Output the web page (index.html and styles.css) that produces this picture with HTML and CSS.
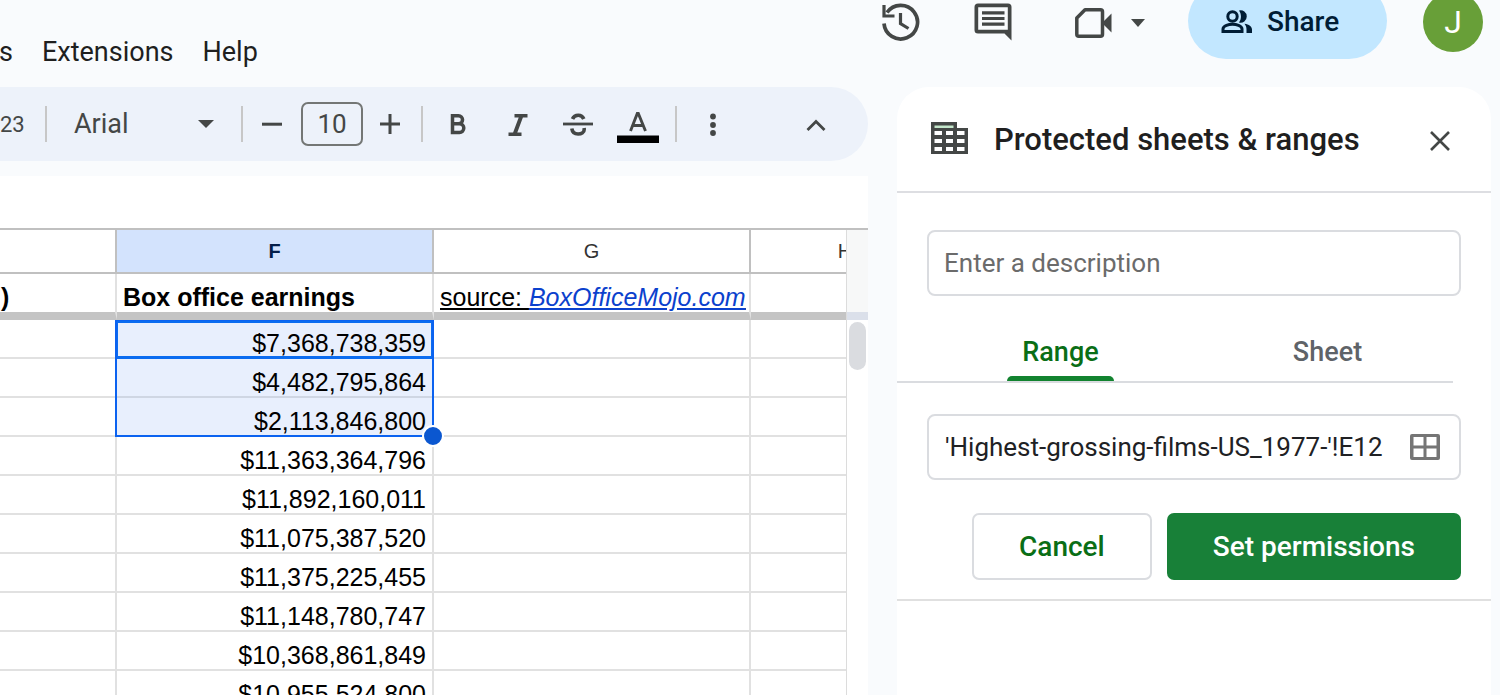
FILE: index.html
```html
<!DOCTYPE html>
<html lang="en">
<head>
<meta charset="utf-8">
<title>Protected sheets &amp; ranges</title>
<link rel="stylesheet" href="styles.css">
</head>
<body>
<div class="app">
  <header class="topbar">
    <nav class="menus" aria-label="Menu bar">
      <button class="menu">s</button>
      <button class="menu">Extensions</button>
      <button class="menu">Help</button>
    </nav>
    <div class="actions">
      <button class="icon-btn history" aria-label="Version history">
        <svg width="40" height="40" viewBox="0 0 40 40" fill="none" stroke="#444746" stroke-width="3.700"><path d="M3 21.500A16.800 16.800 0 1 0 6 10.500"/><path d="M3 3v11h10.500" stroke-width="3.200"/><path d="M19.500 11v10.500l8 5" stroke-width="3.200"/></svg>
      </button>
      <button class="icon-btn comments" aria-label="Comments">
        <svg width="40" height="40" viewBox="0 0 40 40"><path fill="#444746" fill-rule="evenodd" d="M4 1.500h30a3.500 3.500 0 0 1 3.500 3.500V38.500l-7-7H4A3.500 3.500 0 0 1 .5 28V5A3.500 3.500 0 0 1 4 1.500zM4.200 5.200v22.600h29.600V5.200z"/><path fill="#444746" d="M8 9.300h22.500v3.200H8zM8 14.900h22.500v3.200H8zM8 20.500h22.500v3.200H8z"/></svg>
      </button>
      <button class="icon-btn meet" aria-label="Meet">
        <svg width="40" height="32" viewBox="0 0 40 32"><path fill="none" stroke="#444746" stroke-width="3.500" stroke-linejoin="round" d="M11 2.800h15.500a2 2 0 0 1 2 2v22.400a2 2 0 0 1-2 2H4.800a2 2 0 0 1-2-2V11z"/><path fill="#444746" d="M28 16l9.500-9.500v19z"/></svg>
        <svg width="14" height="8" viewBox="0 0 14 8"><path fill="#444746" d="M0 0h14L7 8z"/></svg>
      </button>
      <button class="share">
        <svg width="32" height="24" viewBox="0 0 32 24"><g fill="none" stroke="#001d35" stroke-width="3"><circle cx="11.500" cy="6.500" r="4.700"/><path d="M2 21.500v-2.500c0-3.500 6-4.800 9.500-4.800s9.500 1.300 9.500 4.800v2.500z"/></g><path fill="#001d35" d="M18 .5a6.200 6.200 0 1 1 0 12c2.600-3.500 2.600-8.500 0-12zM23.500 13.800c4.500.8 7.500 2.700 7.500 5.700V23h-5.500v-3.500c0-2.400-.8-4.200-2-5.700z"/></svg>
        Share
      </button>
      <button class="avatar" aria-label="Account">J</button>
    </div>
  </header>

  <div class="workspace">
    <main class="document">
      <div class="toolbar" role="toolbar" aria-label="Formatting">
        <button class="tool number-format">23</button>
        <span class="divider"></span>
        <button class="tool font-picker">Arial
          <svg width="16" height="8" viewBox="0 0 16 8"><path fill="#444746" d="M0 0h16L8 8z"/></svg>
        </button>
        <span class="divider"></span>
        <button class="tool size-down" aria-label="Decrease font size"><svg width="20" height="20" viewBox="0 0 20 20"><path fill="#444746" d="M0 8.700h20v3H0z"/></svg></button>
        <input class="font-size" aria-label="Font size" value="10">
        <button class="tool size-up" aria-label="Increase font size"><svg width="20" height="20" viewBox="0 0 20 20"><path fill="#444746" d="M8.500 0h3v8.500H20v3h-8.500V20h-3v-8.500H0v-3h8.500z"/></svg></button>
        <span class="divider"></span>
        <div class="styles">
          <button class="tool style-btn" aria-label="Bold"><svg width="16" height="22" viewBox="0 0 16 22"><path fill="none" stroke="#444746" stroke-width="3.500" d="M2.500 2.700h6a4 4 0 0 1 0 8.100h-6 7a4.300 4.300 0 0 1 0 8.600h-7zM2.500 1v20"/></svg></button>
          <button class="tool style-btn" aria-label="Italic"><svg width="20" height="24" viewBox="0 0 20 24"><path fill="#444746" d="M6.500 2H19.500v3.600h-4.600L9.300 20.400H13.500V24H.5v-3.600h4.600L10.700 5.600H6.500z"/></svg></button>
          <button class="tool style-btn" aria-label="Strikethrough"><svg width="30" height="26" viewBox="0 0 30 26"><g fill="none" stroke="#444746" stroke-width="3.600"><path d="M9.500 8c1-2.500 3-3.700 5.800-3.700 2.600 0 4.500 1.200 5.500 3.700M8.800 17.500c.5 3.600 3 5.500 6.300 5.500 3.500 0 6.100-1.700 6.100-4.500 0-.6 0-1-.1-1.500"/><path stroke-width="2.800" d="M0 13h30"/></g></svg></button>
          <button class="tool style-btn" aria-label="Text color"><svg width="42" height="38" viewBox="0 0 42 38"><path fill="none" stroke="#444746" stroke-width="2.900" d="M13.500 26L20.300 8.500h1L28.500 26M15.800 20.500h10.500"/><path d="M0 30.500h42v7.500H0z"/></svg></button>
        </div>
        <span class="divider"></span>
        <button class="tool more" aria-label="More"><svg width="6" height="24" viewBox="0 0 6 24"><g fill="#444746"><circle cx="3" cy="4.500" r="2.900"/><circle cx="3" cy="13" r="2.900"/><circle cx="3" cy="21" r="2.900"/></g></svg></button>
        <button class="tool collapse" aria-label="Hide menus"><svg width="20" height="14" viewBox="0 0 20 14"><path fill="none" stroke="#444746" stroke-width="2.800" d="M1.500 13L10 4.500l8.500 8.500"/></svg></button>
      </div>

      <div class="formula-bar"></div>

      <div class="sheet">
        <div class="sheet-view">
          <table class="cells">
            <colgroup><col class="col-e"><col class="col-f"><col class="col-g"><col class="col-h"></colgroup>
            <thead>
              <tr class="letters"><th></th><th class="current">F</th><th>G</th><th>H</th></tr>
              <tr class="frozen"><th class="cut">)</th><th>Box office earnings</th><td><span class="source">source: <a href="#">BoxOfficeMojo.com</a></span></td><td></td></tr>
            </thead>
            <tbody>
              <tr><td></td><td class="picked anchor">$7,368,738,359<span class="active-cell"></span><span class="selection"></span></td><td></td><td></td></tr>
              <tr><td></td><td class="picked">$4,482,795,864</td><td></td><td></td></tr>
              <tr><td></td><td class="picked">$2,113,846,800</td><td></td><td></td></tr>
              <tr><td></td><td>$11,363,364,796</td><td></td><td></td></tr>
              <tr><td></td><td>$11,892,160,011</td><td></td><td></td></tr>
              <tr><td></td><td>$11,075,387,520</td><td></td><td></td></tr>
              <tr><td></td><td>$11,375,225,455</td><td></td><td></td></tr>
              <tr><td></td><td>$11,148,780,747</td><td></td><td></td></tr>
              <tr><td></td><td>$10,368,861,849</td><td></td><td></td></tr>
              <tr><td></td><td>$10,955,524,800</td><td></td><td></td></tr>
            </tbody>
          </table>
        </div>
        <div class="scrollbar"><div class="scroll-head"></div><div class="scroll-thumb"></div></div>
      </div>
    </main>

    <aside class="panel">
      <div class="panel-head">
        <svg width="38" height="34" viewBox="0 0 38 34"><path fill="#444746" d="M0 0h26v6h11v26H0z"/><path fill="#c4e7cb" d="M3.500 3.500h19v2.500h-19z"/><path fill="#fff" d="M3.500 9h7.500v4H3.500zM15 9h7v4h-7zM26 9h7.500v4H26zM3.500 17h7.500v4H3.500zM15 17h7v4h-7zM26 17h7.500v4H26zM3.500 25h7.500v4H3.500zM15 25h7v4h-7zM26 25h7.500v4H26z"/></svg>
        <h2 class="panel-title">Protected sheets &amp; ranges</h2>
        <button class="close" aria-label="Close"><svg width="20" height="20" viewBox="0 0 20 20"><path fill="none" stroke="#444746" stroke-width="2.600" d="M1 1l18 18M19 1L1 19"/></svg></button>
      </div>
      <form class="panel-form">
        <input class="field" aria-label="Description" placeholder="Enter a description">
        <div class="tabs" role="tablist">
          <button type="button" class="tab tab-on" role="tab" aria-selected="true">Range</button>
          <button type="button" class="tab" role="tab" aria-selected="false">Sheet</button>
        </div>
        <div class="field range-field">
          <input class="range-input" aria-label="Range" value="'Highest-grossing-films-US_1977-'!E12">
          <button type="button" class="range-pick" aria-label="Select data range"><svg width="30" height="26" viewBox="0 0 30 26"><path fill="#757575" fill-rule="evenodd" d="M2 0h26a2 2 0 0 1 2 2v22a2 2 0 0 1-2 2H2a2 2 0 0 1-2-2V2a2 2 0 0 1 2-2zM3.500 3v8.500h10V3zM16.500 3v8.500h10V3zM3.500 14.500V23h10v-8.500zM16.500 14.500V23h10v-8.500z"/></svg></button>
        </div>
        <div class="form-actions">
          <button type="button" class="btn cancel">Cancel</button>
          <button type="button" class="btn primary">Set permissions</button>
        </div>
      </form>
    </aside>
  </div>
</div>
</body>
</html>
```
FILE: styles.css
```css
* { box-sizing: border-box; }

body {
  margin: 0;
  background: #f9fbfd;
  color: #1f1f1f;
  font-family: Roboto, "Liberation Sans", sans-serif;
  font-size: 26px;
}

button, input { font: inherit; color: inherit; margin: 0; }
button { background: none; border: 0; padding: 0; cursor: pointer; }
svg { display: block; flex: none; }

.app {
  height: 100vh;
  display: flex;
  flex-direction: column;
  overflow: hidden;
}

/* Top bar */
.topbar {
  flex: none;
  height: 87px;
  display: flex;
  justify-content: space-between;
  align-items: flex-start;
}
.menus {
  display: flex;
  gap: 29px;
  padding-top: 35px;
}
.menu { font-size: 27px; line-height: 34px; color: #1f1f1f; }
.menu:first-child { margin-left: -1px; }
.actions {
  display: flex;
  align-items: center;
  height: 76px;
  margin-top: -17px;
  padding-right: 17px;
}
.icon-btn { display: flex; align-items: center; padding-top: 2px; }
.comments { margin-left: 53px; }
.meet { gap: 17px; margin: 2px 43px 0 60px; }
.share {
  width: 199px;
  height: 76px;
  border-radius: 38px;
  background: #c2e7ff;
  color: #001d35;
  display: flex;
  align-items: center;
  padding: 1px 0 0 33px;
  gap: 14px;
  font-size: 28px;
  font-weight: 500;
}
.avatar {
  width: 60px;
  height: 60px;
  margin: 2px 0 0 36px;
  border-radius: 50%;
  background: #689f38;
  color: #fff;
  font-size: 32px;
}

/* Columns under the top bar */
.workspace {
  flex: 1;
  min-height: 0;
  display: flex;
}
.document {
  flex: 1;
  min-width: 0;
  display: flex;
  flex-direction: column;
}

/* Toolbar */
.toolbar {
  flex: none;
  height: 74px;
  margin-bottom: 15px;
  padding-right: 22px;
  border-radius: 0 37px 37px 0;
  background: #edf2fa;
  color: #444746;
  display: flex;
  align-items: center;
}
.tool {
  height: 60px;
  display: flex;
  align-items: center;
  justify-content: center;
}
.divider { width: 2px; height: 36px; background: #c7c7c7; }
.number-format { width: 45px; justify-content: flex-start; font-size: 22px; }
.font-picker { width: 194px; padding: 0 27px; justify-content: space-between; font-size: 27px; }
.size-down { width: 58px; }
.size-up { width: 54px; margin-right: 4px; }
.font-size {
  width: 62px;
  height: 44px;
  padding: 0;
  border: 2px solid #747775;
  border-radius: 7px;
  background: transparent;
  text-align: center;
}
.styles { display: flex; padding: 0 7px 0 5px; }
.style-btn { width: 60px; }
.more { width: 60px; margin-left: 6px; }
.collapse { width: 60px; margin-left: auto; }

.formula-bar { flex: none; height: 52px; background: #fff; }

/* Grid */
.sheet {
  flex: 1;
  min-height: 0;
  display: flex;
  border-top: 2px solid #c0c0c0;
  background: #fff;
  overflow: hidden;
}
.sheet-view { flex: 1; min-width: 0; overflow: hidden; }
.cells {
  width: 941px;
  table-layout: fixed;
  border-collapse: separate;
  border-spacing: 0;
  font-family: "Liberation Sans", Arial, sans-serif;
  font-size: 25px;
  line-height: 28px;
  color: #000;
}
.col-e { width: 117px; }
.col-f, .col-g { width: 317px; }
.col-h { width: 190px; }
.cells td, .cells th {
  height: 39px;
  padding: 0 6px;
  border: solid #e1e1e1;
  border-width: 0 2px 2px 0;
  text-align: right;
  vertical-align: bottom;
  white-space: nowrap;
}
.cells .letters th {
  height: 44px;
  border-color: #c0c0c0;
  font-size: 20px;
  font-weight: 400;
  text-align: center;
  vertical-align: middle;
  color: #333;
}
.cells .letters .current { background: #d3e3fd; color: #041e49; font-weight: 700; }
.cells .frozen th, .cells .frozen td {
  height: 46px;
  padding-bottom: 1px;
  border-bottom: 8px solid #c4c4c4;
  text-align: left;
}
.cells .frozen .cut { padding-left: 1px; }
.source { text-decoration: underline; }
.source a { color: #0b41cd; font-style: italic; }
.cells .picked { background: #e8effd; border-bottom-color: #cfd6e3; }
.cells .anchor { position: relative; }
.active-cell, .selection { position: absolute; left: -2px; right: -2px; top: 0; }
.active-cell { bottom: -2px; border: 3px solid #0b6cf0; }
.selection { height: calc(300% + 6px); border: solid #0b62f0; border-width: 1px 2px 2px; }
.selection::after {
  content: "";
  position: absolute;
  right: -12px;
  bottom: -12px;
  width: 18px;
  height: 18px;
  border: 2px solid #fff;
  border-radius: 50%;
  background: #0b57d0;
}

.scrollbar { width: 22px; border-left: 1px solid #dcdcdc; }
.scroll-head { height: 90px; background: #f7f8f8; border-bottom: 8px solid #dbe0ea; }
.scroll-thumb { height: 48px; margin: 2px; border-radius: 9px; background: #dadce0; }

/* Side panel */
.panel {
  flex: none;
  width: 594px;
  margin: 0 9px 0 29px;
  border-radius: 32px 32px 0 0;
  background: #fff;
}
.panel-head {
  height: 106px;
  padding: 0 41px 0 34px;
  border-bottom: 2px solid #dddee2;
  display: flex;
  align-items: center;
}
.panel-title { margin: 0 0 0 25px; font-size: 31px; font-weight: 500; color: #1f1f1f; }
.close { margin-left: auto; padding-top: 4px; }
.panel-form {
  padding: 37px 30px 19px;
  border-bottom: 2px solid #e0e0e0;
  display: flex;
  flex-direction: column;
}
.field {
  width: 100%;
  height: 66px;
  padding: 0 15px;
  border: 2px solid #dadce0;
  border-radius: 8px;
  background: #fff;
}
.field::placeholder { color: #6b6b6b; opacity: 1; }
.tabs {
  position: relative;
  display: grid;
  grid-template-columns: 1fr 1fr;
  justify-items: center;
  height: 63px;
  margin: 24px 0 31px;
}
.tabs::after {
  content: "";
  position: absolute;
  left: -30px;
  right: 8px;
  bottom: 0;
  height: 2px;
  background: #dadce0;
}
.tab {
  height: 61px;
  padding: 7px 15px 0;
  border-bottom: 5px solid transparent;
  font-size: 27px;
  font-weight: 500;
  color: #5f6368;
}
.tab-on { color: #0a6e16; position: relative; }
.tab-on::after {
  content: "";
  position: absolute;
  left: 0;
  right: 0;
  bottom: -5px;
  height: 5px;
  border-radius: 5px 5px 0 0;
  background: #12832f;
}
.range-field { display: flex; align-items: center; justify-content: space-between; padding: 0 19px 0 16px; }
.range-input { flex: 1; min-width: 0; border: 0; padding: 0; background: none; outline: 0; color: #202124; }
.form-actions { display: flex; justify-content: flex-end; gap: 15px; margin-top: 33px; }
.btn { height: 67px; border-radius: 7px; font-size: 28px; font-weight: 500; }
.cancel { padding: 0 45px; border: 2px solid #dadce0; color: #0a6e16; }
.primary { padding: 0 46px; background: #188038; color: #fff; }
```
